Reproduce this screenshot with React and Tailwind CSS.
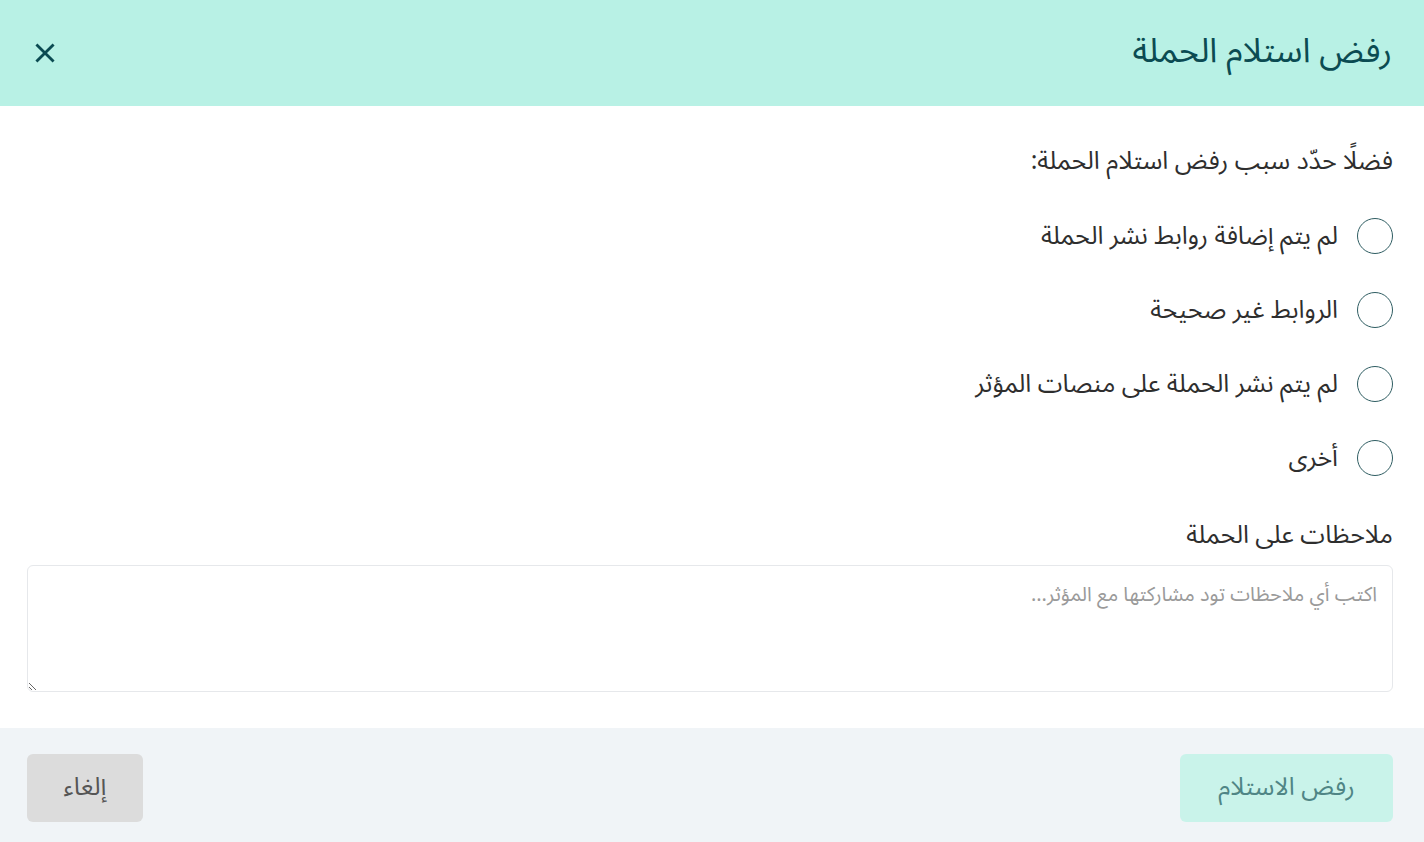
import { useState } from 'react';

const reasons = [
  'لم يتم إضافة روابط نشر الحملة',
  'الروابط غير صحيحة',
  'لم يتم نشر الحملة على منصات المؤثر',
  'أخرى',
];

export default function App() {
  const [reason, setReason] = useState('');
  const [notes, setNotes] = useState('');

  return (
    <div
      dir="rtl"
      className="min-h-screen w-full bg-white flex flex-col"
      style={{ fontFamily: '"Noto Sans Arabic", "Noto Sans", "DejaVu Sans", sans-serif' }}
    >
      {/* header */}
      <div className="h-[106px] bg-[#b8f1e5] flex items-center justify-between pr-[32px] pl-[28px]">
        <h2 className="text-[34px] leading-none text-[#0b4b52] pb-[4px]">رفض استلام الحملة</h2>
        <button className="text-[#0b4b52] p-1">
          <svg width="26" height="26" viewBox="0 0 24 24" fill="none" stroke="currentColor" strokeWidth="2.6" strokeLinecap="square">
            <path d="M5 5l14 14M19 5L5 19" />
          </svg>
        </button>
      </div>

      {/* body */}
      <div className="flex flex-col pr-[31px] pl-[27px] pt-[31px] pb-[36px]">
        <p className="text-[25px] leading-[48px] text-[#2e2e2e]">فضلًا حدّد سبب رفض استلام الحملة:</p>

        <div className="flex flex-col gap-[38px] mt-[33px]">
          {reasons.map((r) => (
            <label key={r} className="flex items-center gap-[19px] cursor-pointer">
              <input
                type="radio"
                name="reason"
                value={r}
                checked={reason === r}
                onChange={() => setReason(r)}
                className="sr-only"
              />
              <span className="w-[36px] h-[36px] rounded-full border-[1.5px] border-[#2f5d62] bg-white flex items-center justify-center">
                {reason === r && <span className="w-[18px] h-[18px] rounded-full bg-[#0b4b52]" />}
              </span>
              <span className="text-[25px] leading-[36px] text-[#2e2e2e]">{r}</span>
            </label>
          ))}
        </div>

        <p className="text-[25px] leading-[48px] text-[#2e2e2e] mt-[35px]">ملاحظات على الحملة</p>
        <textarea
          value={notes}
          onChange={(e) => setNotes(e.target.value)}
          placeholder="اكتب أي ملاحظات تود مشاركتها مع المؤثر..."
          className="mt-[6px] h-[127px] w-full rounded-[6px] border border-[#e6e8eb] px-[15px] py-[12px] text-[20px] leading-[34px] text-[#333] placeholder:text-[#9a9a9a] outline-none"
        />
      </div>

      {/* footer */}
      <div className="flex-1 bg-[#f0f4f7] flex items-start justify-between pr-[31px] pl-[27px] pt-[26px] pb-[20px]">
        <button
          disabled={!reason}
          className="h-[68px] w-[213px] rounded-[6px] bg-[#c9f3ea] text-[25px] text-[#4f8585]"
        >
          رفض الاستلام
        </button>
        <button className="h-[68px] w-[116px] rounded-[6px] bg-[#dcdcdc] text-[25px] text-[#555]">
          إلغاء
        </button>
      </div>
    </div>
  );
}
